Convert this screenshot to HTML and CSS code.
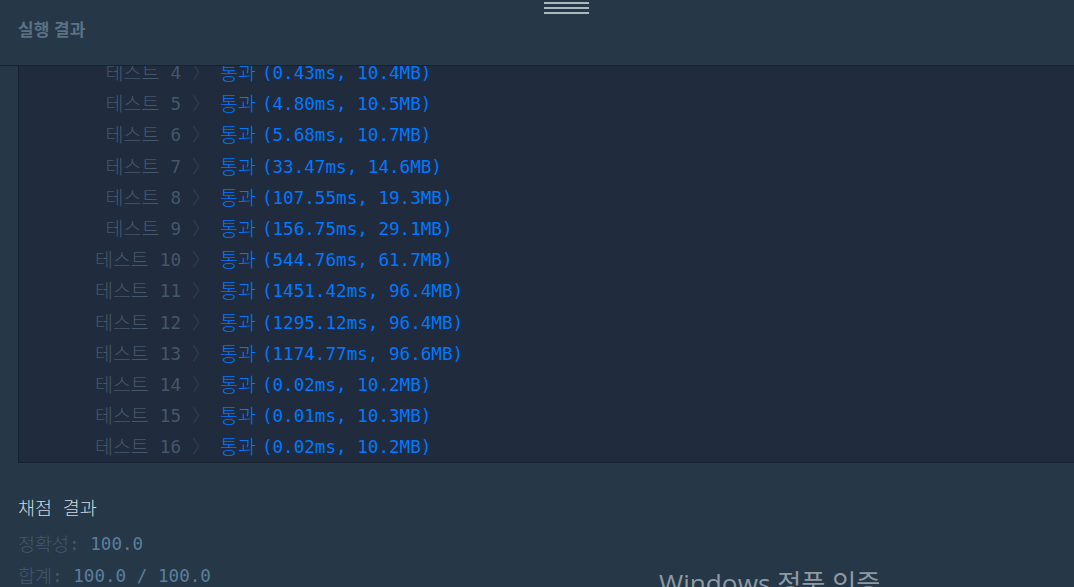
FILE: index.html
```html
<!DOCTYPE html>
<html lang="ko">
<head>
<meta charset="utf-8">
<link rel="stylesheet" href="styles.css">
</head>
<body>
<div class="page">
  <header class="head">
    <div class="handle"><span></span><span></span><span></span></div>
    <h2 class="title">실행 결과</h2>
  </header>
  <section class="panel">
    <div class="rows">
      <div class="row"><span class="lbl"><span class="ko">테스트</span>4</span><span class="sign">〉</span><span class="res"><span class="ko">통과</span>(0.43ms, 10.4MB)</span></div>
      <div class="row"><span class="lbl"><span class="ko">테스트</span>5</span><span class="sign">〉</span><span class="res"><span class="ko">통과</span>(4.80ms, 10.5MB)</span></div>
      <div class="row"><span class="lbl"><span class="ko">테스트</span>6</span><span class="sign">〉</span><span class="res"><span class="ko">통과</span>(5.68ms, 10.7MB)</span></div>
      <div class="row"><span class="lbl"><span class="ko">테스트</span>7</span><span class="sign">〉</span><span class="res"><span class="ko">통과</span>(33.47ms, 14.6MB)</span></div>
      <div class="row"><span class="lbl"><span class="ko">테스트</span>8</span><span class="sign">〉</span><span class="res"><span class="ko">통과</span>(107.55ms, 19.3MB)</span></div>
      <div class="row"><span class="lbl"><span class="ko">테스트</span>9</span><span class="sign">〉</span><span class="res"><span class="ko">통과</span>(156.75ms, 29.1MB)</span></div>
      <div class="row"><span class="lbl"><span class="ko">테스트</span>10</span><span class="sign">〉</span><span class="res"><span class="ko">통과</span>(544.76ms, 61.7MB)</span></div>
      <div class="row"><span class="lbl"><span class="ko">테스트</span>11</span><span class="sign">〉</span><span class="res"><span class="ko">통과</span>(1451.42ms, 96.4MB)</span></div>
      <div class="row"><span class="lbl"><span class="ko">테스트</span>12</span><span class="sign">〉</span><span class="res"><span class="ko">통과</span>(1295.12ms, 96.4MB)</span></div>
      <div class="row"><span class="lbl"><span class="ko">테스트</span>13</span><span class="sign">〉</span><span class="res"><span class="ko">통과</span>(1174.77ms, 96.6MB)</span></div>
      <div class="row"><span class="lbl"><span class="ko">테스트</span>14</span><span class="sign">〉</span><span class="res"><span class="ko">통과</span>(0.02ms, 10.2MB)</span></div>
      <div class="row"><span class="lbl"><span class="ko">테스트</span>15</span><span class="sign">〉</span><span class="res"><span class="ko">통과</span>(0.01ms, 10.3MB)</span></div>
      <div class="row"><span class="lbl"><span class="ko">테스트</span>16</span><span class="sign">〉</span><span class="res"><span class="ko">통과</span>(0.02ms, 10.2MB)</span></div>
    </div>
  </section>
  <section class="score">
    <div class="score-title"><span class="ko">채점</span> <span class="ko">결과</span></div>
    <div class="score-line"><span class="k"><span class="ko">정확성</span>:</span> <span class="v">100.0</span></div>
    <div class="score-line"><span class="k"><span class="ko">합계</span>:</span> <span class="v">100.0 / 100.0</span></div>
  </section>
  <div class="watermark">Windows 정품 인증</div>
</div>
</body>
</html>
```
FILE: styles.css
```css
html, body {
  margin: 0;
  padding: 0;
  background: #263747;
  overflow: hidden;
}
.page {
  position: relative;
  width: 1074px;
  height: 587px;
  overflow: hidden;
  font-family: "DejaVu Sans Mono", "Noto Sans CJK KR", monospace;
}
.ko {
  font-family: "Noto Sans CJK KR", sans-serif;
  font-size: 18.5px;
  font-weight: 300;
  line-height: 1;
  vertical-align: -1px;
}
.head {
  position: relative;
  height: 65px;
  border-bottom: 1px solid #172130;
  display: flex;
  align-items: center;
  padding-left: 18px;
}
.handle {
  position: absolute;
  left: 544px;
  top: 2px;
  width: 45px;
  display: flex;
  flex-direction: column;
  gap: 3px;
}
.handle span {
  display: block;
  height: 2px;
  background: #a9b8bd;
}
.title {
  margin: 0;
  margin-top: -8px;
  font-family: "Noto Sans CJK KR", "Noto Sans", sans-serif;
  font-size: 17px;
  font-weight: 700;
  color: #5b7184;
}
.panel {
  margin-left: 18px;
  height: 396px;
  background: #202b3d;
  border-left: 1px solid #172130;
  border-bottom: 1px solid #172130;
  overflow: hidden;
}
.rows {
  margin-top: -8px;
  font-size: 17.6px;
  line-height: 31.2px;
}
.row {
  display: grid;
  grid-template-columns: 162px 39px auto;
  white-space: pre;
  height: 31.2px;
}
.row .ko {
  font-size: 19.5px;
}
.lbl {
  text-align: right;
  color: #44576c;
}
.lbl .ko {
  margin-right: 11px;
}
.sign {
  color: #2f3e51;
  padding-left: 11px;
}
.res {
  color: #0078ff;
}
.res .ko {
  margin-right: 6px;
}
.score {
  padding: 29px 0 0 18px;
  display: flex;
  flex-direction: column;
}
.score-title {
  font-size: 17.6px;
  line-height: 32px;
  height: 32px;
  color: #d1d7db;
  white-space: pre;
}
.score-line {
  font-size: 17.6px;
  line-height: 32px;
  height: 32px;
  color: #44576c;
  white-space: pre;
  margin-top: 4px;
}
.score-line + .score-line {
  margin-top: 0;
}
.score-line .k {
  color: #44586d;
}
.score-line .v {
  color: #5b7f9d;
}
.watermark {
  position: absolute;
  left: 659px;
  top: 563px;
  font-family: "Open Sans", "Noto Sans CJK KR", sans-serif;
  font-size: 26.2px;
  color: #8e9aa3;
  white-space: nowrap;
}
```
